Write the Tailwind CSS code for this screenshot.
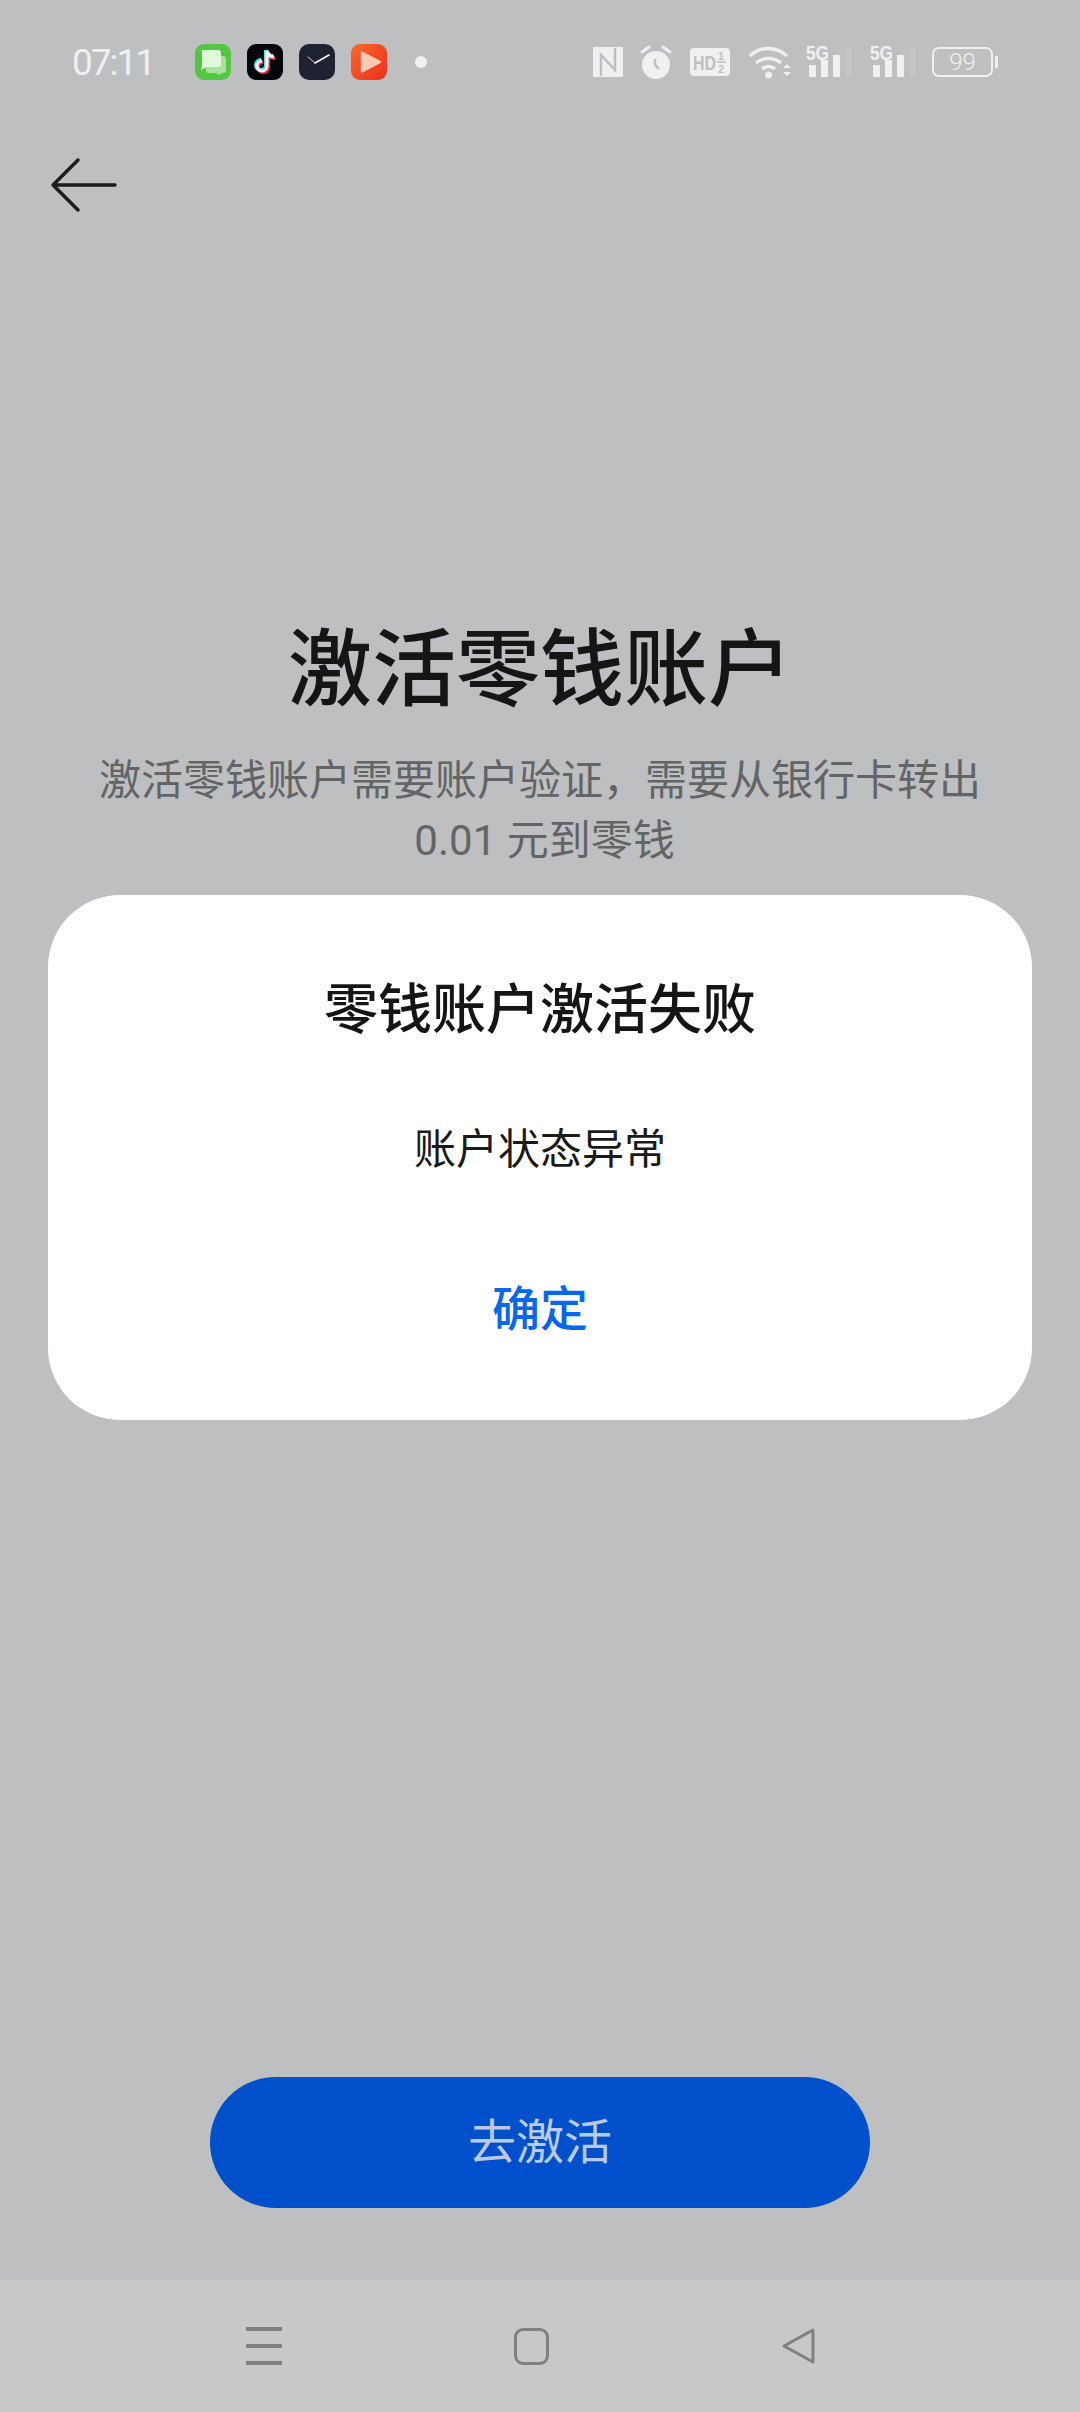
<!DOCTYPE html>
<html lang="zh-CN">
<head>
  <meta charset="UTF-8" />
  <meta name="viewport" content="width=device-width, initial-scale=1.0" />
  <title>激活零钱账户</title>
  <script src="https://cdn.jsdelivr.net/npm/@tailwindcss/browser@4"></script>
</head>
<body class="font-['Roboto','Noto_Sans_CJK_SC',sans-serif]">
  <div class="relative w-[1080px] h-[2412px] overflow-hidden flex flex-col bg-[#bebfc1]">

    <!-- status bar -->
    <div class="h-[124px] shrink-0 flex items-center pl-[72px] pr-[87px] text-[#f0f0f0]">
      <span class="w-[123px] text-[37px] font-normal leading-none tracking-[-2px]">07:11</span>
      <div class="flex items-center gap-[16px]">
        <svg class="w-[36px] h-[36px]" viewBox="0 0 36 36">
          <rect width="36" height="36" rx="9" fill="#54c644"/>
          <path d="M14 12h14a3 3 0 0 1 3 3v11a3 3 0 0 1-3 3h-1l-3 2-3-2h-7a3 3 0 0 1-3-3V15a3 3 0 0 1 3-3z" fill="#a9e29b"/>
          <path d="M8 6h15a3 3 0 0 1 3 3v11a3 3 0 0 1-3 3H12l-6 3 1-4V9a2 2 0 0 1 1-3z" fill="#e2f8da"/>
        </svg>
        <svg class="w-[36px] h-[36px]" viewBox="0 0 36 36">
          <rect width="36" height="36" rx="9" fill="#05060c"/>
          <path d="M20 7v15a5 5 0 1 1-5-5M20 7c1 4 3 6 7 6" fill="none" stroke="#ee2a55" stroke-width="4" transform="translate(1 1)"/>
          <path d="M20 7v15a5 5 0 1 1-5-5M20 7c1 4 3 6 7 6" fill="none" stroke="#4fe0e6" stroke-width="4" transform="translate(-1 -1)"/>
          <path d="M20 7v15a5 5 0 1 1-5-5M20 7c1 4 3 6 7 6" fill="none" stroke="#fbfbfb" stroke-width="3"/>
        </svg>
        <svg class="w-[36px] h-[36px]" viewBox="0 0 36 36">
          <rect width="36" height="36" rx="10" fill="#1f2230"/>
          <path d="M16 19 30 11" stroke="#fff" stroke-width="1.6" stroke-linecap="round"/>
          <path d="M16 19 9 13" stroke="#d8d8d8" stroke-width="1" stroke-linecap="round"/>
        </svg>
        <svg class="w-[36px] h-[36px]" viewBox="0 0 36 36">
          <defs><linearGradient id="play" x1="0" y1="0" x2="1" y2="1"><stop offset="0" stop-color="#f8692c"/><stop offset="1" stop-color="#ec2f1c"/></linearGradient></defs>
          <rect width="36" height="36" rx="9" fill="url(#play)"/>
          <path d="M11 8.500 29 18 11 27.500z" fill="#fbc9b8" stroke="#fbc9b8" stroke-width="2.500" stroke-linejoin="round"/>
        </svg>
        <span class="ml-[12px] w-[12px] h-[12px] rounded-full bg-[#f0f0f0]"></span>
      </div>
      <div class="ml-auto flex items-center">
        <svg class="w-[30px] h-[30px]" viewBox="0 0 30 30">
          <rect width="30" height="30" rx="1" fill="#f0f0f0"/>
          <path d="M8 29V8l14 15V1" fill="none" stroke="#bebfc1" stroke-width="2.500"/>
        </svg>
        <svg class="ml-[17px] w-[32px] h-[34px]" viewBox="0 0 32 34">
          <circle cx="16" cy="20" r="14" fill="#f0f0f0"/>
          <path d="M15 14v6l4 4" fill="none" stroke="#bebfc1" stroke-width="2.500"/>
          <path d="M2 7l7-5M30 7l-7-5" stroke="#f0f0f0" stroke-width="3" stroke-linecap="round"/>
        </svg>
        <svg class="ml-[18px] w-[40px] h-[28px]" viewBox="0 0 40 28">
          <rect width="40" height="28" rx="4" fill="#f0f0f0"/>
          <text x="3" y="22" font-family="Liberation Sans" font-weight="700" font-size="20" fill="#bebfc1" textLength="23" lengthAdjust="spacingAndGlyphs">HD</text>
          <text x="28" y="12" font-family="Liberation Sans" font-weight="700" font-size="11" fill="#bebfc1">1</text>
          <path d="M27 14h9" stroke="#bebfc1" stroke-width="1.500"/>
          <text x="28" y="25" font-family="Liberation Sans" font-weight="700" font-size="11" fill="#bebfc1">2</text>
        </svg>
        <svg class="ml-[18px] w-[44px] h-[36px]" viewBox="0 0 44 36">
          <path d="M2 12C12 2 28 2 39 12M8 19c7-6 18-6 25 0M14 25c4-3 9-3 13 0" fill="none" stroke="#f0f0f0" stroke-width="3.500"/>
          <circle cx="20.500" cy="31" r="3.500" fill="#f0f0f0"/>
          <path d="M35 24l4-4 4 4zM35 28l4 4 4-4z" fill="#f0f0f0"/>
        </svg>
        <svg class="ml-[14px] w-[46px] h-[40px]" viewBox="0 -2 46 40">
          <text x="0" y="16" font-family="Liberation Sans" font-weight="700" font-size="20" fill="#f0f0f0" textLength="23" lengthAdjust="spacingAndGlyphs">5G</text>
          <rect x="3" y="21" width="7" height="12" fill="#f0f0f0"/>
          <rect x="15" y="16" width="7" height="17" fill="#f0f0f0"/>
          <rect x="27" y="11" width="7" height="22" fill="#f0f0f0"/>
          <rect x="40" y="3" width="5" height="30" fill="#f0f0f0" fill-opacity=".15"/>
        </svg>
        <svg class="ml-[18px] w-[46px] h-[40px]" viewBox="0 -2 46 40">
          <text x="0" y="16" font-family="Liberation Sans" font-weight="700" font-size="20" fill="#f0f0f0" textLength="23" lengthAdjust="spacingAndGlyphs">5G</text>
          <rect x="3" y="21" width="7" height="12" fill="#f0f0f0"/>
          <rect x="15" y="16" width="7" height="17" fill="#f0f0f0"/>
          <rect x="27" y="11" width="7" height="22" fill="#f0f0f0"/>
          <rect x="40" y="3" width="5" height="30" fill="#f0f0f0" fill-opacity=".15"/>
        </svg>
        <div class="ml-[16px] relative w-[61px] h-[30px] rounded-[7px] border-2 border-[#f0f0f0] flex items-center justify-center text-[24px] font-light leading-none">
          99
          <span class="absolute right-[-7px] top-[7px] w-[3px] h-[12px] bg-[#f0f0f0]"></span>
        </div>
      </div>
    </div>

    <!-- back arrow -->
    <div class="mt-[33px] pl-[50px] h-[56px] shrink-0">
      <svg class="w-[70px] h-[56px]" viewBox="0 0 70 56">
        <path d="M28 3 3 28l25 25M3 28h62" fill="none" stroke="#1c1c1c" stroke-width="3.500" stroke-linecap="round" stroke-linejoin="round"/>
      </svg>
    </div>

    <!-- page content -->
    <div class="flex flex-col items-center text-center pt-[403px]">
      <h1 class="text-[84px] leading-[110px] font-medium text-[#151515]">激活零钱账户</h1>
      <p class="mt-[25px] w-[900px] text-[42px] leading-[60px] text-[#636466]">激活零钱账户需要账户验证，需要从银行卡转出<br><span class="ml-[9px]">0.01 元到零钱</span></p>
    </div>

    <div class="mt-auto mb-[72px] flex justify-center">
      <button class="w-[660px] h-[131px] rounded-[66px] bg-[#0050cc] text-[48px] text-[#b9c9e8]">去激活</button>
    </div>

    <!-- nav bar -->
    <div class="h-[132px] shrink-0 relative bg-[#c8c8c8] flex items-center gap-[232px] pl-[246px]">
      <div class="w-[36px] flex flex-col gap-[13px]">
        <span class="h-[4px] bg-[#808080]"></span>
        <span class="h-[4px] bg-[#808080]"></span>
        <span class="h-[4px] bg-[#808080]"></span>
      </div>
      <span class="w-[35px] h-[37px] rounded-[9px] border-[3px] border-[#808080]"></span>
      <svg class="w-[35px] h-[38px]" viewBox="0 0 35 38">
        <path d="M32 3 3 19l29 16z" fill="none" stroke="#808080" stroke-width="3" stroke-linejoin="round"/>
      </svg>
    </div>

    <!-- dialog -->
    <div class="absolute left-[48px] top-[895px] w-[984px] h-[525px] rounded-[72px] bg-white flex flex-col items-center">
      <h2 class="mt-[79px] text-[54px] leading-[74px] font-medium text-[#151515]">零钱账户激活失败</h2>
      <p class="mt-[72px] text-[42px] leading-[60px] text-[#1a1a1a]">账户状态异常</p>
      <button class="mt-[100px] text-[48px] leading-[60px] font-medium text-[#0a67e8]">确定</button>
    </div>
  </div>
</body>
</html>
